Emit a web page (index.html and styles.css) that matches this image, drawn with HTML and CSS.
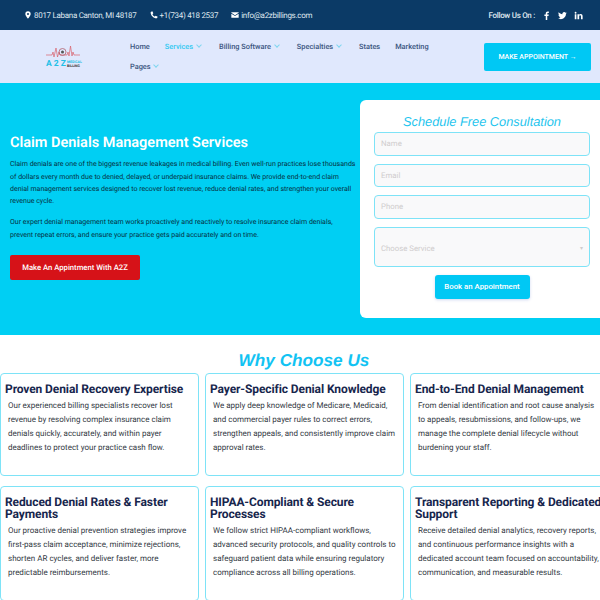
FILE: index.html
```html
<!DOCTYPE html>
<html lang="en">
<head>
    <meta charset="UTF-8">
    <meta name="viewport" content="width=device-width, initial-scale=1.0">
    <title>Claim Denials Management Services - A2Z Medical Billing</title>
    <link rel="stylesheet" href="styles.css">
</head>
<body>
    <div class="topbar">
        <div class="contact">
            <span class="contact-item">
                <svg class="icon" viewBox="0 0 12 12"><path fill="#fff" fill-rule="evenodd" d="M6 0.5a4 4 0 0 0-4 4C2 7 6 11.5 6 11.5S10 7 10 4.500a4 4 0 0 0-4-4zM6 3a1.500 1.500 0 1 1 0 3 1.500 1.500 0 0 1 0-3z"/></svg>
                8017 Labana Canton, MI 48187
            </span>
            <span class="contact-item">
                <svg class="icon" viewBox="0 0 12 12"><path fill="#fff" d="M1 1.500L3.500.5 5 3.500 3.700 4.700c.6 1.400 2 2.900 3.600 3.600L8.500 7l3 1.500-1 2.500C5.500 11.500.5 6.500 1 1.500z"/></svg>
                +1(734) 418 2537
            </span>
            <span class="contact-item">
                <svg class="icon" viewBox="0 0 12 12"><path fill="#fff" d="M.5 2h11v.8L6 6.300.5 2.800zM.5 4l5.500 3.500L11.500 4v6H.5z"/></svg>
                info@a2zbillings.com
            </span>
        </div>
        <div class="social">
            <span>Follow Us On :</span>
            <svg class="social-icon" viewBox="0 0 12 12"><path fill="#fff" d="M7 12V6.800h1.700L9 4.800H7V3.600c0-.6.200-1 1-1h1.100V.8C8.900.8 8.300.700 7.600.700 6 .7 5 1.700 5 3.300v1.500H3.200v2H5V12z"/></svg>
            <svg class="social-icon" viewBox="0 0 12 12"><path fill="#fff" d="M11.800 2.500c-.4.200-.9.300-1.400.4.500-.3.900-.8 1.100-1.300-.5.300-1 .5-1.500.6a2.400 2.400 0 0 0-4.100 2.200C3.900 4.300 2.100 3.300.9 1.800c-.7 1.100-.3 2.500.7 3.200-.4 0-.8-.1-1.100-.3 0 1.200.8 2.200 1.900 2.400-.3.100-.7.100-1.100 0 .3 1 1.200 1.600 2.200 1.700-1 .8-2.200 1.100-3.500 1 4.900 2.900 10.800-.4 10.600-6.300.5-.3.900-.6 1.200-1z"/></svg>
            <svg class="social-icon" viewBox="0 0 12 12"><path fill="#fff" d="M1 4.200h2.200V11H1zM2.100 1a1.200 1.200 0 1 1 0 2.500 1.200 1.200 0 0 1 0-2.500zM4.600 4.200h2.100v.9c.4-.6 1.100-1.100 2.200-1.100 2.100 0 2.600 1.400 2.600 3.200V11H9.300V7.600c0-.8 0-1.800-1.100-1.800S6.900 6.600 6.900 7.500V11H4.600z"/></svg>
        </div>
    </div>

    <header class="navbar">
        <div class="logo">
            <svg class="logo-pulse" viewBox="0 0 36 14">
                <path fill="none" stroke="#d9606c" stroke-width=".7" d="M0 10h6l1-3 1 5 2-9 1.500 9 1.500-5 1 3h7l1-3 1 4 1.500-10 1.500 10 1-4 1 3h6"/>
                <circle cx="16.500" cy="7" r="3.500" fill="none" stroke="#b0606c" stroke-width=".8"/>
                <circle cx="16.500" cy="7" r="1.500" fill="#555"/>
            </svg>
            <div class="logo-text">
                <span class="logo-a2z">A 2 Z</span>
                <span class="logo-small"><b class="logo-medical">MEDICAL</b><b>BILLING</b></span>
            </div>
        </div>
        <nav class="menu">
            <a href="#">Home</a>
            <a href="#" class="active">Services <span class="caret"></span></a>
            <a href="#">Billing Software <span class="caret"></span></a>
            <a href="#">Specialties <span class="caret"></span></a>
            <a href="#">States</a>
            <a href="#">Marketing</a>
            <a href="#">Pages <span class="caret"></span></a>
        </nav>
        <a href="#" class="make-btn">MAKE APPOINTMENT &#8594;</a>
    </header>

    <section class="hero">
        <div class="hero-text">
            <h1>Claim Denials Management Services</h1>
            <p>Claim denials are one of the biggest revenue leakages in medical billing. Even well-run practices lose thousands of dollars every month due to denied, delayed, or underpaid insurance claims. We provide end-to-end claim denial management services designed to recover lost revenue, reduce denial rates, and strengthen your overall revenue cycle.</p>
            <p>Our expert denial management team works proactively and reactively to resolve insurance claim denials, prevent repeat errors, and ensure your practice gets paid accurately and on time.</p>
            <a href="#" class="red-btn">Make An Appintment With A2Z</a>
        </div>
        <form class="consult">
            <h2>Schedule Free Consultation</h2>
            <div class="field">Name</div>
            <div class="field">Email</div>
            <div class="field">Phone</div>
            <div class="field field-select">Choose Service <span class="select-arrow">&#9662;</span></div>
            <button type="button" class="book-btn">Book an Appointment</button>
        </form>
    </section>

    <section class="why">
        <h2>Why Choose Us</h2>
        <div class="cards">
            <div class="card">
                <h3>Proven Denial Recovery Expertise</h3>
                <p>Our experienced billing specialists recover lost revenue by resolving complex insurance claim denials quickly, accurately, and within payer deadlines to protect your practice cash flow.</p>
            </div>
            <div class="card">
                <h3>Payer-Specific Denial Knowledge</h3>
                <p>We apply deep knowledge of Medicare, Medicaid, and commercial payer rules to correct errors, strengthen appeals, and consistently improve claim approval rates.</p>
            </div>
            <div class="card">
                <h3>End-to-End Denial Management</h3>
                <p>From denial identification and root cause analysis to appeals, resubmissions, and follow-ups, we manage the complete denial lifecycle without burdening your staff.</p>
            </div>
            <div class="card">
                <h3>Reduced Denial Rates &amp; Faster Payments</h3>
                <p>Our proactive denial prevention strategies improve first-pass claim acceptance, minimize rejections, shorten AR cycles, and deliver faster, more predictable reimbursements.</p>
            </div>
            <div class="card">
                <h3>HIPAA-Compliant &amp; Secure Processes</h3>
                <p>We follow strict HIPAA-compliant workflows, advanced security protocols, and quality controls to safeguard patient data while ensuring regulatory compliance across all billing operations.</p>
            </div>
            <div class="card">
                <h3>Transparent Reporting &amp; Dedicated Support</h3>
                <p>Receive detailed denial analytics, recovery reports, and continuous performance insights with a dedicated account team focused on accountability, communication, and measurable results.</p>
            </div>
        </div>
    </section>
</body>
</html>
```

FILE: styles.css
```css
html, body {
    overflow: hidden;
    height: 600px;
}
body {
    margin: 0;
    font-family: 'Roboto', Arial, sans-serif;
    background: #fff;
    text-rendering: geometricPrecision;
}
a {
    text-decoration: none;
}

/* top bar */
.topbar {
    height: 30px;
    background: #0b3a66;
    color: #dfe7ef;
    display: flex;
    align-items: center;
    justify-content: space-between;
    padding: 0 17px 0 24px;
    font-size: 8px;
    letter-spacing: -0.3px;
}
.contact {
    display: flex;
    gap: 13px;
}
.contact-item {
    display: flex;
    align-items: center;
    gap: 2px;
}
.icon {
    width: 8px;
    height: 8px;
}
.social {
    display: flex;
    align-items: center;
    gap: 7px;
    font-weight: 500;
}
.social-icon {
    width: 9px;
    height: 9px;
}

/* nav */
.navbar {
    height: 53px;
    background: #e0e8fd;
    display: flex;
    align-items: center;
    padding: 0 9px 0 46px;
}
.logo {
    width: 38px;
    margin-right: 46px;
}
.logo-pulse {
    display: block;
    width: 36px;
    height: 14px;
}
.logo-text {
    display: flex;
    align-items: center;
    gap: 1px;
}
.logo-a2z {
    color: #22bfe6;
    font-size: 8.500px;
    font-weight: 700;
    white-space: nowrap;
}
.logo-small {
    display: flex;
    flex-direction: column;
    font-size: 3.500px;
    line-height: 4px;
    color: #333;
}
.logo-medical {
    color: #22bfe6;
}
.menu {
    width: 310px;
    display: flex;
    flex-wrap: wrap;
    column-gap: 15px;
    row-gap: 0;
}
.menu a {
    font-size: 7.400px;
    font-weight: 500;
    line-height: 20px;
    color: #3a5580;
}
.menu a.active {
    color: #33c9f2;
}
.caret {
    display: inline-block;
    width: 3px;
    height: 3px;
    margin: 0 3px 2px 2px;
    border-right: 1px solid #7fd6f0;
    border-bottom: 1px solid #7fd6f0;
    transform: rotate(45deg);
}
.make-btn {
    width: 107px;
    height: 28px;
    display: flex;
    align-items: center;
    justify-content: center;
    margin-left: auto;
    background: #00c8f4;
    border-radius: 2px;
    color: #fff;
    font-size: 7px;
    font-weight: 500;
}

/* hero */
.hero {
    height: 252px;
    background: #00cff3;
    display: flex;
    align-items: center;
    justify-content: space-between;
    padding-left: 10px;
}
.hero-text {
    width: 347px;
    padding-bottom: 5px;
}
.hero-text h1 {
    margin: 0 0 5px;
    color: #fff;
    font-size: 14.500px;
    font-weight: 600;
    line-height: 20px;
}
.hero-text p {
    margin: 0 0 8.600px;
    color: #063042;
    font-size: 7px;
    line-height: 12.400px;
}
.red-btn {
    display: inline-block;
    margin-top: 5px;
    width: 130px;
    height: 25px;
    line-height: 25px;
    text-align: center;
    background: #d61218;
    border-radius: 2px;
    color: #fff;
    font-size: 7.700px;
    font-weight: 500;
}
.consult {
    width: 240px;
    height: 218px;
    box-sizing: border-box;
    padding: 14px 10px 0 14px;
    background: #fff;
    border-radius: 6px 0 0 6px;
    display: flex;
    flex-direction: column;
    align-items: center;
}
.consult h2 {
    margin: 0 0 2px;
    color: #1fc5ee;
    font-family: 'Liberation Sans', Arial, sans-serif;
    font-size: 12.800px;
    font-style: italic;
    font-weight: 400;
    line-height: 16px;
}
.field {
    align-self: stretch;
    box-sizing: border-box;
    height: 23.500px;
    margin-bottom: 8px;
    padding-left: 6px;
    display: flex;
    align-items: center;
    justify-content: space-between;
    background: #f9f9fa;
    border: 1px solid #7ee3f7;
    border-radius: 4px;
    color: #cfcccd;
    font-size: 7.800px;
}
.field-select {
    height: 40px;
    padding: 3px 6px 0;
}
.select-arrow {
    font-size: 6px;
}
.book-btn {
    width: 95px;
    height: 24px;
    background: #00c8f4;
    border: 0;
    border-radius: 3px;
    box-shadow: 0 1px 3px rgba(60, 90, 200, 0.25);
    color: #fff;
    font-family: inherit;
    font-size: 7.800px;
    font-weight: 500;
}

/* why choose us */
.why {
    padding-top: 15px;
}
.why h2 {
    margin: 0 0 3px;
    padding-left: 8px;
    text-align: center;
    color: #12c3f3;
    font-family: 'Liberation Sans', Arial, sans-serif;
    font-size: 17.200px;
    font-style: italic;
    font-weight: 700;
    line-height: 20px;
}
.cards {
    display: grid;
    grid-template-columns: repeat(3, 199px);
    column-gap: 6px;
    row-gap: 10px;
    width: 620px;
}
.card {
    box-sizing: border-box;
    padding: 9px 4px 20px 4px;
    border: 1px solid #7ee3f7;
    border-radius: 4px;
}
.card h3 {
    margin: 0;
    color: #17264d;
    font-size: 12px;
    font-weight: 700;
    line-height: 12px;
    letter-spacing: -0.1px;
}
.card p {
    margin: 4px 3px 0 3px;
    color: #333a44;
    font-size: 8px;
    line-height: 14px;
}
```
